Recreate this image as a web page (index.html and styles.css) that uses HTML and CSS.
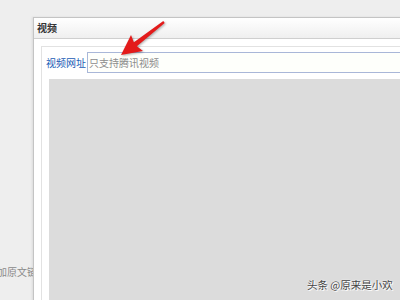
FILE: index.html
```html
<!DOCTYPE html>
<html lang="zh-CN">
<head>
  <meta charset="UTF-8" />
  <title>视频</title>
  <link rel="stylesheet" href="styles.css">
</head>
<body>

  <div class="desktop-text">加原文链接</div>

  <div class="dialog">
    <div class="titlebar">视频</div>
    <div class="dialog-body">
      <div class="group">
        <div class="url-row">
          <label class="url-label" for="videoUrl">视频网址</label>
          <input type="text" id="videoUrl" class="url-input" placeholder="只支持腾讯视频"/>
        </div>
        <div class="preview"></div>
      </div>
    </div>
  </div>

  <svg class="arrow" width="400" height="300" viewBox="0 0 400 300">
    <polygon points="121,55 131,35.1 133.9,42.3 163.3,21 164.7,23 136.9,46.3 143,51.1" fill="#e31b1b"/>
  </svg>

  <div class="watermark">头条 @原来是小欢</div>

</body>
</html>
```

FILE: styles.css
```css
html, body {
  margin: 0;
  height: 100%;
  overflow: hidden;
}
body {
  position: relative;
  background: #eeeeee;
  font-family: "Noto Sans CJK SC", "Noto Sans", sans-serif;
  font-size: 10px;
  color: #222;
}
.desktop-text {
  position: absolute;
  left: -3px;
  top: 264px;
  font-size: 10px;
  color: #8a8a8a;
  white-space: nowrap;
}
.dialog {
  position: absolute;
  left: 33px;
  top: 17px;
  width: 420px;
  height: 320px;
  background: #fff;
  border: 1px solid #c4c4c4;
  box-shadow: -1px 0 2px rgba(0, 0, 0, 0.08);
}
.titlebar {
  height: 20px;
  line-height: 20px;
  padding-left: 3px;
  background: linear-gradient(#ffffff, #efefef);
  border-bottom: 1px solid #cfcfcf;
  color: #333;
  font-weight: bold;
}
.dialog-body {
  padding: 7px 0 0 7px;
}
.group {
  border: 1px solid #e2e2e2;
  padding: 5px 0 0 4px;
  height: 300px;
}
.url-row {
  display: flex;
  align-items: center;
  gap: 1px;
}
.url-label {
  color: #1a5bb5;
  white-space: nowrap;
}
.url-input {
  flex: 1;
  height: 19px;
  margin: 0;
  padding: 0 1px;
  border: 1px solid #a9b7d8;
  background: #fefffb;
  font-family: inherit;
  font-size: 10px;
  outline: none;
}
.url-input::placeholder {
  color: #8c8c8c;
}
.preview {
  margin: 6px 0 0 3px;
  height: 260px;
  background: #dcdcdc;
}
.arrow {
  position: absolute;
  left: 0;
  top: 0;
  pointer-events: none;
  filter: drop-shadow(1px 1px 1px rgba(0, 0, 0, 0.3));
}
.watermark {
  position: absolute;
  left: 307px;
  top: 277px;
  font-size: 10.5px;
  color: #444;
  white-space: nowrap;
  text-shadow: 0 0 2px #fff, 1px 1px 0 #fff;
}
```
